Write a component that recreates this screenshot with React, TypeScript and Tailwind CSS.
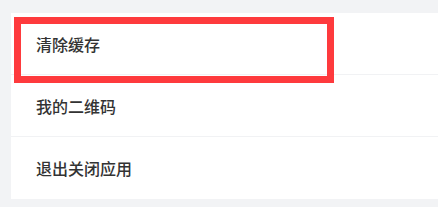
import React from 'react';

const items = ['清除缓存', '我的二维码', '退出关闭应用'];

const App: React.FC = () => {
  return (
    <div
      className="relative w-[438px] h-[207px] bg-[#f2f3f5] pl-[11px] pt-[13px] overflow-hidden"
      style={{ fontFamily: '"Noto Sans CJK SC", "Noto Sans", sans-serif' }}
    >
      <div className="bg-white">
        {items.map((label, i) => (
          <div
            key={label}
            className={`h-[62px] flex items-center pl-[25px] text-[16px] font-medium text-[#333333] ${
              i < items.length - 1 ? 'border-b border-[#f1f2f4]' : ''
            }`}
          >
            {label}
          </div>
        ))}
      </div>

      {/* highlight box */}
      <div className="absolute left-[14px] top-[17px] w-[320px] h-[66px] border-[7px] border-[#fe3a3d]" />
    </div>
  );
};

export default App;
